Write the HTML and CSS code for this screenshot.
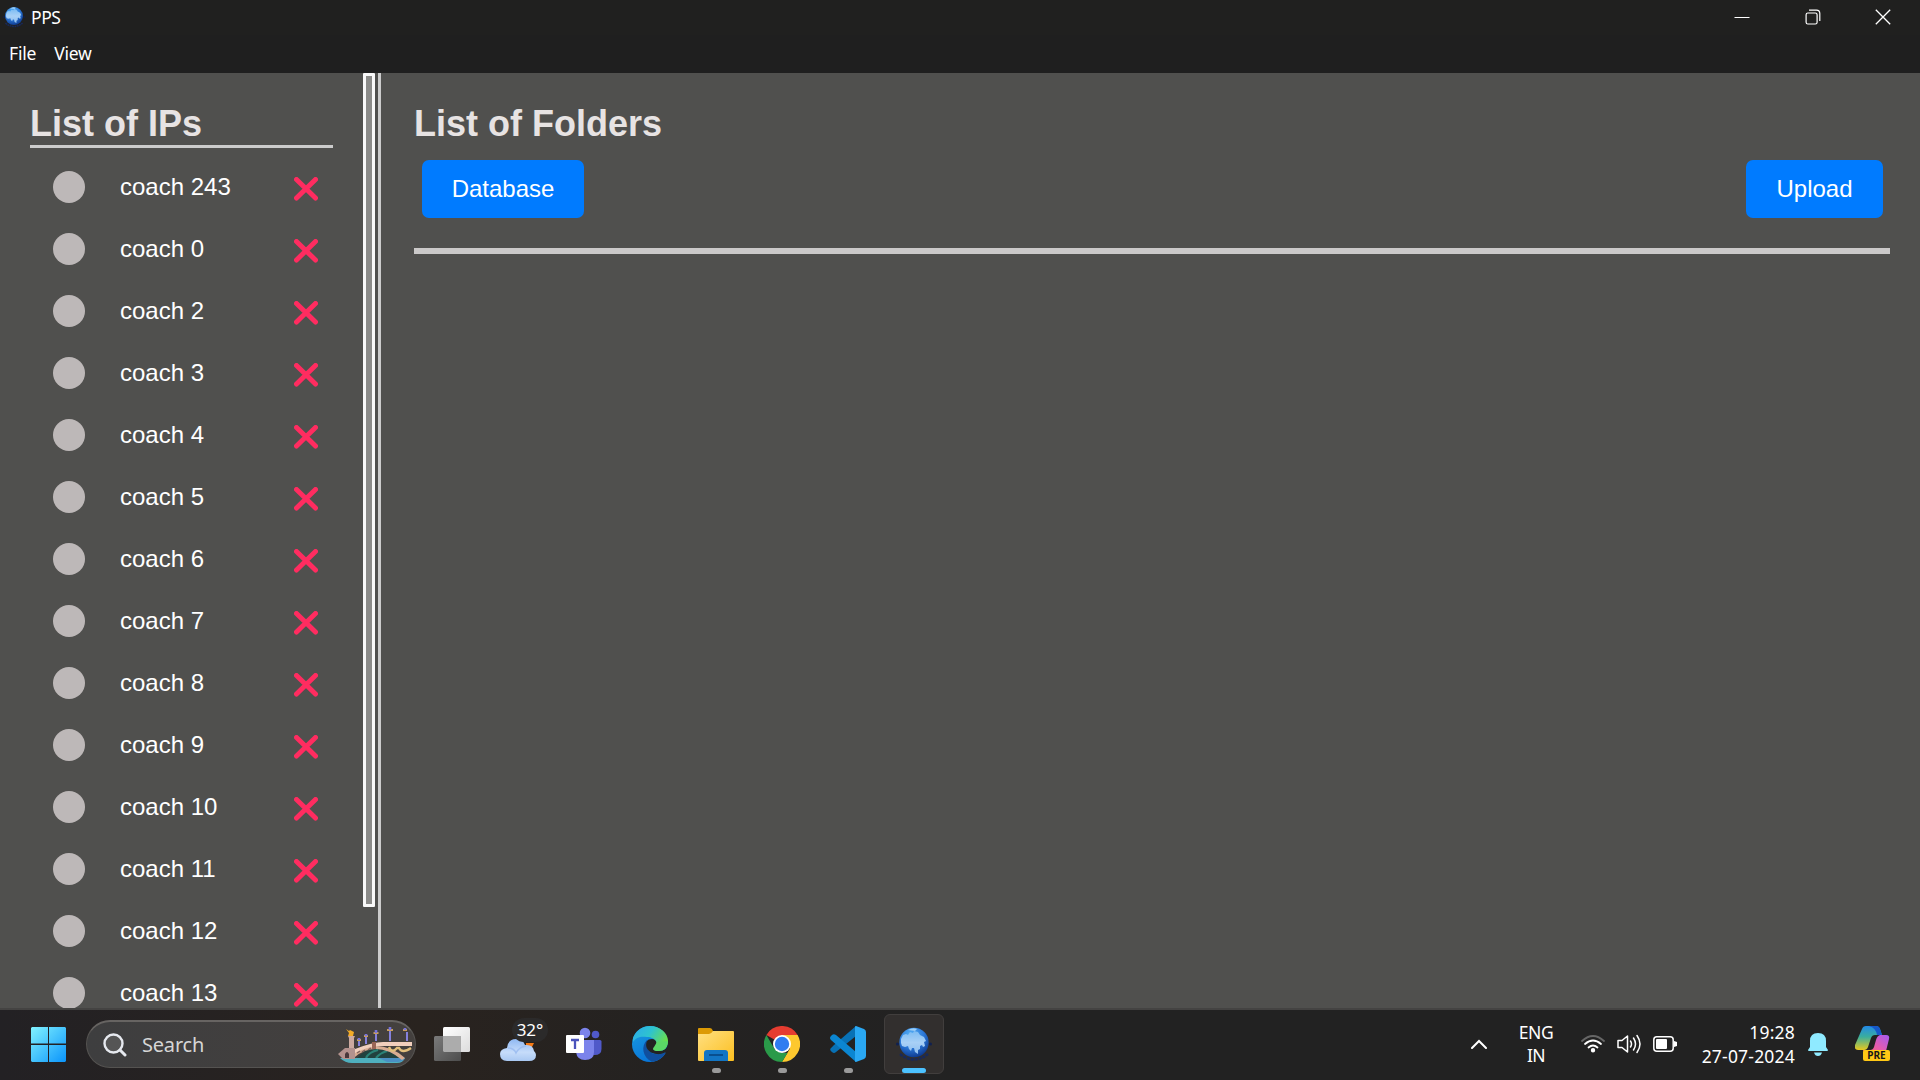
FILE: index.html
```
<!DOCTYPE html>
<html lang="en">
<head>
<meta charset="utf-8">
<title>PPS</title>
<link rel="stylesheet" href="styles.css">
</head>
<body>
<svg class="defs" width="0" height="0" aria-hidden="true">
  <defs>
    <radialGradient id="ball" cx=".4" cy=".25" r=".8"><stop offset="0" stop-color="#58b4f8"/><stop offset=".55" stop-color="#2a76d6"/><stop offset="1" stop-color="#0b3488"/></radialGradient>
    <linearGradient id="land" x1="0" y1="0" x2="0" y2="1"><stop offset="0" stop-color="#7dbcf3"/><stop offset=".5" stop-color="#a8d0f6"/><stop offset="1" stop-color="#8dbdf0"/></linearGradient>
    <linearGradient id="win" gradientUnits="userSpaceOnUse" x1="0" y1="0" x2="35" y2="35"><stop offset="0" stop-color="#82f3ff"/><stop offset="1" stop-color="#0a94fb"/></linearGradient>
    <linearGradient id="tvw" x1="0" y1="0" x2="1" y2="1"><stop offset="0" stop-color="#fff"/><stop offset="1" stop-color="#dcdcdc"/></linearGradient>
    <linearGradient id="tvg" x1="0" y1="0" x2="1" y2="1"><stop offset="0" stop-color="#7a7a7a"/><stop offset="1" stop-color="#4d4d4d"/></linearGradient>
    <linearGradient id="cloud" x1="0" y1="0" x2="0" y2="1"><stop offset="0" stop-color="#8fb8f3"/><stop offset=".6" stop-color="#c6dcfa"/><stop offset="1" stop-color="#a9c8f2"/></linearGradient>
    <linearGradient id="edgetop" x1="0" y1="0" x2="1" y2=".5"><stop offset="0" stop-color="#2ba9ee"/><stop offset=".5" stop-color="#2ec3cf"/><stop offset="1" stop-color="#6be04a"/></linearGradient>
    <linearGradient id="edgeleft" x1="0" y1="0" x2=".5" y2="1"><stop offset="0" stop-color="#1b9de0"/><stop offset="1" stop-color="#0874d8"/></linearGradient>
    <linearGradient id="folder" x1="0" y1="0" x2="1" y2="1"><stop offset="0" stop-color="#ffe082"/><stop offset="1" stop-color="#fcbf20"/></linearGradient>
    <linearGradient id="cop1" x1="0" y1="0" x2="0" y2="1"><stop offset="0" stop-color="#2389e6"/><stop offset=".45" stop-color="#3aae9d"/><stop offset="1" stop-color="#e9c81e"/></linearGradient>
    <linearGradient id="cop2" x1="1" y1="0" x2="0" y2="1"><stop offset="0" stop-color="#a45bf2"/><stop offset=".5" stop-color="#e45bb0"/><stop offset="1" stop-color="#ff6b5e"/></linearGradient>
    <symbol id="globe" viewBox="0 0 36 36">
      <path d="M4 28q14 11 28 0" stroke="#17295c" stroke-width="2.500" stroke-dasharray="3 1" fill="none"/>
      <circle cx="1.500" cy="18" r="1.500" fill="#10204f"/><circle cx="34.500" cy="18" r="1.500" fill="#10204f"/>
      <circle cx="18" cy="16.500" r="14.700" fill="url(#ball)"/>
      <path d="M5 13l2-4 3-1 2 1 2-3 3 1 1-2 4 1 2 3 4 2 2 4-2 1 1 4-2 1-1-2-2 1 0 3-2 1 0 4-3-2-1-4-2 0-1 3-2-2-1-3-3 1-3-1-1-3z" fill="url(#land)"/>
      <path d="M12 4q5-3 9-1l-2 2z" fill="#9bcdf7"/>
    </symbol>
    <symbol id="cross" viewBox="0 0 24 24"><path d="M2.500 2.500l19 18.500M21.500 2.500l-19 18.500" stroke="#ff2c60" stroke-width="5" stroke-linecap="round"/></symbol>
  </defs>
</svg>

<header class="titlebar">
  <svg class="app-icon" width="22" height="22"><use href="#globe"/></svg>
  <span class="app-name">PPS</span>
  <div class="window-controls">
    <svg width="16" height="16" viewBox="0 0 16 16"><path d="M.5 8.500h15" stroke="#fff" fill="none"/></svg>
    <svg width="16" height="16" viewBox="0 0 16 16" fill="none" stroke="#fff" stroke-width="1.200"><rect x="1.100" y="4" width="11" height="11" rx="1.800"/><path d="M4 1.200h7.500a3.300 3.300 0 0 1 3.300 3.300V12"/></svg>
    <svg width="16" height="16" viewBox="0 0 16 16"><path d="M.8.800l14.400 14.400M15.200.800L.8 15.200" stroke="#fff" stroke-width="1.300"/></svg>
  </div>
</header>
<nav class="menubar"><span>File</span><span>View</span></nav>

<main class="workspace">
  <aside class="sidebar">
    <div class="ip-panel">
      <h1 class="ip-title">List of IPs</h1>
      <ul class="ip-list">
        <li><i class="status"></i><span>coach 243</span><svg class="remove"><use href="#cross"/></svg></li>
        <li><i class="status"></i><span>coach 0</span><svg class="remove"><use href="#cross"/></svg></li>
        <li><i class="status"></i><span>coach 2</span><svg class="remove"><use href="#cross"/></svg></li>
        <li><i class="status"></i><span>coach 3</span><svg class="remove"><use href="#cross"/></svg></li>
        <li><i class="status"></i><span>coach 4</span><svg class="remove"><use href="#cross"/></svg></li>
        <li><i class="status"></i><span>coach 5</span><svg class="remove"><use href="#cross"/></svg></li>
        <li><i class="status"></i><span>coach 6</span><svg class="remove"><use href="#cross"/></svg></li>
        <li><i class="status"></i><span>coach 7</span><svg class="remove"><use href="#cross"/></svg></li>
        <li><i class="status"></i><span>coach 8</span><svg class="remove"><use href="#cross"/></svg></li>
        <li><i class="status"></i><span>coach 9</span><svg class="remove"><use href="#cross"/></svg></li>
        <li><i class="status"></i><span>coach 10</span><svg class="remove"><use href="#cross"/></svg></li>
        <li><i class="status"></i><span>coach 11</span><svg class="remove"><use href="#cross"/></svg></li>
        <li><i class="status"></i><span>coach 12</span><svg class="remove"><use href="#cross"/></svg></li>
        <li><i class="status"></i><span>coach 13</span><svg class="remove"><use href="#cross"/></svg></li>
      </ul>
    </div>
    <div class="scroll-track"><div class="scroll-thumb"></div></div>
  </aside>
  <section class="folders">
    <h1>List of Folders</h1>
    <div class="actions"><button>Database</button><button>Upload</button></div>
  </section>
</main>

<footer class="taskbar">
  <svg class="start" width="35" height="35" viewBox="0 0 35 35" fill="url(#win)"><path d="M1 0h16v16.500H0V1zM18 0h16l1 1v15.500H18zM0 18h17v17H1l-1-1zM18 18h17v16l-1 1H18z"/></svg>
  <div class="search">
    <svg width="24" height="24" viewBox="0 0 24 24" fill="none" stroke="#e6e9ef"><circle cx="10.500" cy="10.500" r="9" stroke-width="2.400" fill="#555"/><path d="M17 17l5 5" stroke-width="3" stroke-linecap="round"/></svg>
    <span>Search</span>
    <svg class="bridge" width="76" height="40" viewBox="0 0 76 40">
      <path d="M20 33Q28 24 40 22q14 1 26 12z" fill="#22423f"/>
      <path d="M29 33q3-6 12-8M39 33q4-5 11-7" stroke="#2b8277" stroke-width="2.200" fill="none"/>
      <path d="M3 33h65q-2 5-8 5H15q-7 0-12-5z" fill="#4fb0bf"/><path d="M42 33h26q-2 4-8 4H50z" fill="#4a90c4"/>
      <path d="M11 11h7l-1 2v11h-5V13z" fill="#cdaaa0"/><path d="M1 29l7-6h10v11H6z" fill="#b3928e"/><path d="M8 33v-4q2-4 4 0v4z" fill="#49383b"/>
      <path d="M9 4l3 2 1-1 4 2-1 4h-5l1-3z" fill="#f2ab28"/>
      <path d="M18 32V26l20-5q17 0 30 12l-3 2Q52 24 39 24q-12 0-21 8z" fill="#d8ac92"/>
      <path d="M52 22q3 7 8 1l2 0q3 6 12 0" stroke="#e2bf7d" stroke-width="2.400" fill="none"/>
      <path d="M18 24q18-7 28-7h29v4H46q-14 0-28 7z" fill="#f1cfbd"/>
      <path d="M20 28l3-2M25 27l3-2M31 25l3-2" stroke="#80655e" stroke-width="1.500"/>
      <rect x="35" y="17" width="4" height="7" fill="#9a6657"/>
      <path d="M22 21v-6M29 19v-7M39 16V8M53 16V6M70 16V7" stroke="#8581dd" stroke-width="2"/>
      <path d="M20 15h4M27 11h4M36.500 8h5M50 5h6M66 5h4" stroke="#c89c5c" stroke-width="2"/><path d="M22 15v-2M29 11V9M39 8V5M53 5V2M68 5V3" stroke="#7774d9" stroke-width="2.600"/>
    </svg>
  </div>
  <div class="apps">
    <div class="app"><svg width="36" height="36" viewBox="0 0 36 36"><rect x="9" y="1" width="27" height="25" rx="1.500" fill="url(#tvw)"/><rect x="0" y="10" width="27" height="25" rx="1.500" fill="url(#tvg)"/><path d="M9 10h18v16H10l-1-1z" fill="#acacac"/></svg></div>
    <div class="app weather"><svg width="36" height="24" viewBox="0 0 36 24"><path d="M26 5h8l-2 4h-6z" fill="#f57a16"/><path d="M7 10Q8 1 16 1q7 0 9 6 8-1 9 6 2 2 2 4 0 6-7 6H7q-7 0-7-7 0-5 7-6z" fill="url(#cloud)"/><path d="M8 10q6 0 8 5 3-6 10-7" fill="none" stroke="#9fbff1" stroke-width="1.500"/></svg><b class="temp">32°</b></div>
    <div class="app"><svg width="36" height="36" viewBox="0 0 36 36"><circle cx="19" cy="7" r="5.300" fill="#7b83eb"/><circle cx="29.500" cy="8.500" r="3.800" fill="#5059c9"/><path d="M24 14h10q1.500 0 1.500 1.500V23q0 6-7 6h-4z" fill="#5059c9"/><path d="M10 14h18v12q0 8-9 8-8 0-9-8z" fill="#7b83eb"/><rect x="0" y="9" width="18" height="18" rx="1" fill="#fff"/><path d="M5 14h8M9 14v9" stroke="#4b53bc" stroke-width="2.300"/></svg></div>
    <div class="app"><svg width="36" height="36" viewBox="0 0 36 36"><circle cx="18" cy="18" r="18" fill="url(#edgeleft)"/><path d="M1 12C4 4 11 0 18 0c10 0 18 7 18 15 0 7-5 10-10 10-5 0-6-2-4-4 5-7-2-10-7-10C9 10 4 11 1 16z" fill="url(#edgetop)"/><path d="M15 14c-6 6-5 17 5 21.800 6-.8 12-4.800 13.500-9.300-9 4-18 1-18.500-7z" fill="#104f9e"/><path d="M15 15q-3 7 4 11.500Q27 30 33 26.500q2 0 0 3l6 1V20l-3-3q-1 8-9 8c-5 0-6-2-4-4 3-4 1-8-3-8q-4 0-5 2z" fill="#232222"/><path d="M36 15q0 10-10 10c-5 0-6-2-4-4l3-5z" fill="#5bd866"/></svg></div>
    <div class="app running"><svg width="36" height="36" viewBox="0 0 36 36"><path d="M0 3q0-1 1-1h11q2 0 3 3v5H0z" fill="#dc9a05"/><path d="M0 8h11q2 0 4-3h20q1 0 1 1v28q0 1-1 1H1q-1 0-1-1z" fill="url(#folder)"/><path d="M6 35V27q0-3 3-3h18q3 0 3 3v8z" fill="#1275c4"/><path d="M11 29h14" stroke="#094f8f" stroke-width="2"/></svg></div>
    <div class="app running"><svg width="36" height="36" viewBox="0 0 36 36"><path d="M18 18L2.400 9A18 18 0 0 1 33.600 9z" fill="#e53c30"/><path d="M18 9h15.600A18 18 0 0 1 18 36l8-13.500z" fill="#fdc82e"/><path d="M2.400 9l7.800 13.500L18 27h5.500L18 36A18 18 0 0 1 2.400 9z" fill="#2a9a49"/><circle cx="18" cy="18" r="9" fill="#fff"/><circle cx="18" cy="18" r="7.200" fill="#2f7cf0"/></svg></div>
    <div class="app running"><svg width="36" height="36" viewBox="0 0 36 36"><path d="M1 22l3-3L26 0v10L6 26q-2 2-4 0-3-2-1-4z" fill="#0871b5"/><path d="M1 10q-2 2 0 4l25 22V26L6 9Q3 7 1 10z" fill="#0b86d1"/><path d="M26 0l8 3q2 1 2 3v24q0 2-2 3l-8 3q-1 0-1-1V1q0-1 1-1z" fill="#2aa8f3"/></svg></div>
    <div class="app running active"><svg width="36" height="36"><use href="#globe"/></svg></div>
  </div>
  <div class="tray">
    <svg class="chevron" width="16" height="10" viewBox="0 0 16 10"><path d="M1 9l7-7 7 7" fill="none" stroke="#fff" stroke-width="2" stroke-linecap="round"/></svg>
    <div class="lang">ENG<br>IN</div>
    <svg class="wifi" width="24" height="18" viewBox="0 0 24 18" fill="none" stroke="#fff" stroke-width="1.800" stroke-linecap="round"><path d="M1 6q11-10 22 0" stroke="#666"/><path d="M4 9q8-7 16 0M7.500 12.500q4.500-4 9 0"/><circle cx="12" cy="15.300" r="1.300" fill="#fff"/></svg>
    <svg class="volume" width="24" height="20" viewBox="0 0 24 20" fill="none" stroke="#fff" stroke-width="1.500" stroke-linecap="round" stroke-linejoin="round"><path d="M1 6.500h4L10.500 2v16L5 13.500H1z"/><path d="M13.500 7q2 3 0 6M16.500 4q4 6 0 12M20 1.500q6 8.500 0 17"/></svg>
    <svg class="battery" width="24" height="16" viewBox="0 0 24 16"><rect x=".8" y=".8" width="19.400" height="14.400" rx="3" fill="none" stroke="#fff" stroke-width="1.500"/><rect x="3" y="3" width="11" height="10" rx="1" fill="#fff"/><path d="M21 5l3 1v4l-3 1z" fill="#fff"/></svg>
    <div class="clock">19:28<br>27-07-2024</div>
    <svg class="bell" width="20" height="24" viewBox="0 0 20 24"><path d="M2 9Q2 1 10 1t8 8v6l2 3q0 1-1 1H1q-1 0-1-1l2-3zM6 20.500h8Q13 24 10 24t-4-3.500z" fill="#8feaff"/></svg>
    <div class="copilot"><svg width="35" height="30" viewBox="0 0 35 30"><path d="M7 3q1-3 4-3h10q3 0 4 3l2 6h-7q-3 0-4 3l-3 9q-1 3-4 3H3q-4 0-3-5z" fill="url(#cop1)"/><path d="M14 0h7q3 0 4 3l2 6h-5q-1-7-8-9z" fill="#1658c8"/><path d="M23 9h8q4 0 3 4l-3 12q-1 4-5 4H12q-3 0-4-5h5q3 0 4-3l3-9q1-3 3-3z" fill="url(#cop2)"/><path d="M21 9h4q-3 1-4 5l-2 7q-1 3-4 3h-3q3 0 4-3l3-9q0-2 2-3z" fill="#222"/></svg><b>PRE</b></div>
  </div>
</footer>
</body>
</html>
```
FILE: styles.css
```
* { box-sizing: border-box; }
body { margin: 0; width: 1920px; height: 1080px; overflow: hidden; display: flex; flex-direction: column; background: #50504e; color: #fff; font-family: "Liberation Sans", Arial, sans-serif; }
svg { display: block; flex: none; }
.defs { position: absolute; }
.titlebar, .menubar, .taskbar { font-family: "Noto Sans", sans-serif; }
.titlebar { height: 35px; flex: none; display: flex; align-items: center; padding: 0 29px 0 3px; background: #20201f; }
.app-name { margin: 0 0 2px 6px; font-size: 17.500px; letter-spacing: -.4px; }
.app-icon { margin-bottom: 1px; }
.window-controls { margin-left: auto; margin-bottom: 2px; display: flex; gap: 54.500px; }
.menubar { height: 38px; flex: none; display: flex; gap: 18px; padding: 5px 9px; background: #1f1f1f; font-size: 17.500px; line-height: 26px; letter-spacing: -.2px; }

.workspace { flex: 1; min-height: 0; display: flex; overflow: hidden; }
.sidebar { width: 381px; flex: none; display: flex; border-right: 3px solid #ccc; }
.ip-panel { width: 363px; padding: 30px 30px 0; }
h1 { margin: 0; font-size: 36px; line-height: 41px; color: #e7e3e3; }
.ip-title { height: 45px; border-bottom: 3px solid #ccc; }
.ip-list { margin: 0; padding: 8px 15px 0 23px; list-style: none; }
.ip-list li { height: 62px; display: flex; align-items: center; font-size: 24px; }
.status { width: 32px; height: 32px; border-radius: 50%; background: #bdb8b8; }
.ip-list span { margin-left: 35px; }
.remove { width: 24px; height: 24px; margin: 3px 0 0 auto; }
.scroll-track { width: 12px; }
.scroll-thumb { height: 834px; background: #8b8b89; border: 3px solid #f9f9f9; border-radius: 1px; }
.folders { flex: 1; padding: 30px 30px 0 33px; }
.actions { height: 110px; padding: 16px 7px 0 8px; display: flex; justify-content: space-between; align-items: flex-start; border-bottom: 6px solid #cbc9c9; }
button { width: 162px; height: 58px; padding: 0; border: 0; border-radius: 7px; background: #007bff; color: #fff; font: 24px "Liberation Sans", Arial, sans-serif; }
button:last-child { width: 137px; }

.taskbar { height: 72px; flex: none; display: flex; align-items: center; padding-bottom: 2px; border-top: 2px solid #444342; background: linear-gradient(90deg, #232124, #29231f 22%, #242221 35%, #222 50%, #222); }
.start { margin-left: 31px; }
.search { width: 330px; height: 48px; margin-left: 20px; padding: 0 2px 0 16px; display: flex; align-items: center; border: 1px solid #555351; border-top: 2px solid #676462; border-radius: 24px; background: linear-gradient(90deg, #3e3e3f, #44403e); font-size: 20px; color: #d6d6d6; }
.search span { margin-left: 15px; letter-spacing: -.2px; }
.bridge { margin-left: auto; }
.apps { margin-left: 3px; display: flex; height: 70px; align-items: center; }
.app { position: relative; width: 66px; height: 60px; display: flex; align-items: center; justify-content: center; }
.weather svg { margin-top: 11px; }
.temp { position: absolute; left: 27px; top: 4px; width: 36px; height: 24px; border-radius: 12px; background: #2b2a2a; font: 17px/24px "Noto Sans", sans-serif; text-align: center; }
.running::after { content: ""; position: absolute; left: 29px; bottom: 1px; width: 9px; height: 5px; border-radius: 3px; background: #9a9a9a; }
.active { width: 60px; margin-left: 3px; border: 1px solid #413e3d; border-radius: 6px; background: #322f2e; }
.active::after { left: 17px; bottom: 0; width: 24px; background: #4cc2ff; }
.tray { margin-left: auto; margin-right: 30px; display: flex; align-items: center; font-size: 17.500px; line-height: 24px; letter-spacing: -.5px; }
.lang { width: 60px; margin-left: 19px; text-align: center; line-height: 23px; }
.wifi { margin-left: 15px; }
.volume { margin-left: 12px; }
.battery { margin-left: 12px; }
.clock { width: 110px; margin: 0 0 1px 8px; text-align: right; white-space: nowrap; letter-spacing: .2px; }
.bell { margin-left: 13px; }
.copilot { position: relative; width: 35px; height: 36px; margin-left: 27px; }
.copilot b { position: absolute; left: 8px; top: 24px; width: 27px; height: 11px; border-radius: 2px; background: #ffc815; color: #171717; font-size: 10px; line-height: 11px; text-align: center; letter-spacing: 0; }
```
